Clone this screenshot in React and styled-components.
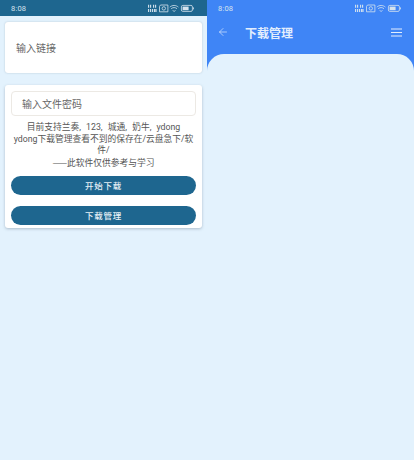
import React from 'react';
import styled, { createGlobalStyle } from 'styled-components';
import { ArrowLeft } from 'lucide-react';

const GlobalStyle = createGlobalStyle`
    html, body {
        margin: 0;
        padding: 0;
        background: #e3f2fd;
    }
    * {
        box-sizing: border-box;
    }
`;

const PAGE = styled.div`
    display: flex;
    width: 414px;
    height: 460px;
    overflow: hidden;
    font-family: Roboto, 'Noto Sans CJK SC', sans-serif;
`;

const SCREEN = styled.div`
    width: 207px;
    height: 460px;
    display: flex;
    flex-direction: column;
    background: ${props => props.$blue ? '#3f85f6' : '#e3f2fd'};
`;

const STATUSBAR = styled.div`
    height: 16px;
    flex: none;
    display: flex;
    align-items: center;
    justify-content: space-between;
    padding: 0 13px 0 11px;
    background: ${props => props.$blue ? '#3f85f6' : '#1e668f'};
    color: #d5e3ee;
    font-size: 7.5px;
    letter-spacing: 0.2px;
`;

const STATUSICONS = styled.svg`
    display: block;
    width: 46px;
    height: 9px;
`;

const StatusIcons = () => (
    <STATUSICONS viewBox="0 0 46 9" fill="none" stroke="#d5e3ee" strokeWidth="0.8">
        <path d="M0.6 0.8v3M2.6 0.8v3M5.6 0.8v3M7.6 0.8v3M0.6 5v3M2.6 5v3M4.6 5v3M6.6 5v3M8 5v3" strokeWidth="1.1" />
        <path d="M12.5 1h7.4v6.8h-8.4v-5.4z" />
        <circle cx="15.8" cy="4.4" r="1.7" />
        <path d="M21.8 3.1c2.6-2.2 6-2.2 8.6 0M23.2 4.7c1.8-1.5 4-1.5 5.8 0M24.8 6.2l1.3 1.4 1.3-1.4" />
        <rect x="33.4" y="1.4" width="11" height="6" rx="1.4" />
        <rect x="34.6" y="2.6" width="6" height="3.6" fill="#d5e3ee" stroke="none" />
        <path d="M45.5 3.4v2" />
    </STATUSICONS>
);

const CONTENT = styled.div`
    display: flex;
    flex-direction: column;
    gap: 12px;
    padding: 6px 5px 0;
`;

const LINKCARD = styled.div`
    height: 51px;
    display: flex;
    align-items: center;
    padding: 0 11px;
    background: #fff;
    border-radius: 3px;
    box-shadow: 0 0 2px rgba(90, 110, 130, 0.35);
    color: #666;
    font-size: 10px;
`;

const FORMCARD = styled.div`
    height: 143px;
    padding: 6px 6px 0;
    background: #fff;
    border-radius: 3px;
    box-shadow: 0 1px 3px rgba(90, 110, 130, 0.4);
`;

const PASSWORD = styled.div`
    height: 25px;
    display: flex;
    align-items: center;
    padding: 0 10px 1px;
    border: 1px solid #ece9e4;
    border-radius: 4px;
    color: #666;
    font-size: 10px;
`;

const NOTE = styled.div`
    margin-top: 6px;
    color: #555;
    font-size: 8.75px;
    line-height: 11.7px;
    text-align: center;
`;

const NOTELINE = styled.div`
    word-spacing: ${props => props.$spaced ? '3px' : '0'};
    height: ${props => props.$double ? '23.4px' : '11.7px'};
`;

const DASH = styled.span`
    font-family: 'Noto Sans CJK SC', sans-serif;
`;

const BUTTON = styled.div`
    height: 19px;
    display: flex;
    align-items: center;
    justify-content: center;
    margin-top: ${props => props.$first ? '7px' : '11px'};
    background: #1e668f;
    border-radius: 10px;
    color: #e6f0f6;
    font-size: 8.5px;
    font-weight: 500;
    letter-spacing: 0.8px;
`;

const HEADER = styled.div`
    height: 38px;
    flex: none;
    display: flex;
    align-items: center;
    padding: 0 12px 6px 10px;
    color: #e3eefd;
`;

const TITLE = styled.div`
    flex: 1;
    margin-left: 16px;
    font-size: 12px;
    font-weight: 700;
`;

const BURGER = styled.svg`
    display: block;
    width: 11px;
    height: 9px;
`;

const BODY = styled.div`
    flex: 1;
    background: #e3f2fd;
    border-radius: 17px 17px 0 0;
`;

const App = () => {
    return (
        <PAGE>
            <GlobalStyle />
            <SCREEN>
                <STATUSBAR>
                    <span>8:08</span>
                    <StatusIcons />
                </STATUSBAR>
                <CONTENT>
                    <LINKCARD>输入链接</LINKCARD>
                    <FORMCARD>
                        <PASSWORD>输入文件密码</PASSWORD>
                        <NOTE>
                            <NOTELINE $spaced>目前支持兰奏, 123, 城通, 奶牛, ydong</NOTELINE>
                            <NOTELINE $double>ydong下载管理查看不到的保存在/云盘急下/软件/</NOTELINE>
                            <NOTELINE><DASH>——</DASH>此软件仅供参考与学习</NOTELINE>
                        </NOTE>
                        <BUTTON $first>开始下载</BUTTON>
                        <BUTTON>下载管理</BUTTON>
                    </FORMCARD>
                </CONTENT>
            </SCREEN>
            <SCREEN $blue>
                <STATUSBAR $blue>
                    <span>8:08</span>
                    <StatusIcons />
                </STATUSBAR>
                <HEADER>
                    <ArrowLeft size={12} strokeWidth={1.3} />
                    <TITLE>下载管理</TITLE>
                    <BURGER viewBox="0 0 11 9" stroke="currentColor" strokeWidth="1.2">
                        <path d="M0 1h11M0 4.5h11M0 8h11" />
                    </BURGER>
                </HEADER>
                <BODY />
            </SCREEN>
        </PAGE>
    );
};

export default App;
